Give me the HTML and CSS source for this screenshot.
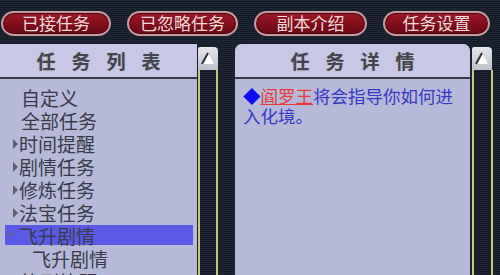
FILE: index.html
```html
<!DOCTYPE html>
<html lang="zh">
<head>
<meta charset="utf-8">
<link rel="stylesheet" href="styles.css">
</head>
<body>
<div class="topbar">
  <div class="btn b1">已接任务</div>
  <div class="btn b2">已忽略任务</div>
  <div class="btn b3">副本介绍</div>
  <div class="btn b4">任务设置</div>
</div>
<div class="main">
  <div class="panel left">
    <div class="phead">任务列表</div>
    <div class="pbody list">
      <div class="row"><span class="gut"></span><span class="txt">自定义</span></div>
      <div class="row"><span class="gut"></span><span class="txt">全部任务</span></div>
      <div class="row"><span class="gut"><span class="tri"></span></span><span class="txt">时间提醒</span></div>
      <div class="row"><span class="gut"><span class="tri"></span></span><span class="txt">剧情任务</span></div>
      <div class="row"><span class="gut"><span class="tri"></span></span><span class="txt">修炼任务</span></div>
      <div class="row"><span class="gut"><span class="tri"></span></span><span class="txt">法宝任务</span></div>
      <div class="row sel"><span class="gut"><span class="dtri"></span></span><span class="txt">飞升剧情</span></div>
      <div class="row sub"><span class="txt">飞升剧情</span></div>
      <div class="row"><span class="gut"></span><span class="txt">签到答题</span></div>
    </div>
  </div>
  <div class="sbar sleft">
    <div class="sbtn"><svg width="20" height="22" viewBox="0 0 20 22"><polygon points="10,6 16,17 4,17" fill="#ffffff"/><line x1="10" y1="6" x2="4" y2="17" stroke="#303038" stroke-width="2"/></svg></div>
    <div class="track"></div>
  </div>
  <div class="panel right">
    <div class="phead">任务详情</div>
    <div class="pbody detail">
      <p class="line"><span class="dia">◆</span><span class="npc">阎罗王</span>将会指导你如何进</p>
      <p class="line">入化境。</p>
    </div>
  </div>
  <div class="sbar sright">
    <div class="sbtn"><svg width="20" height="22" viewBox="0 0 20 22"><polygon points="10,6 16,17 4,17" fill="#ffffff"/><line x1="10" y1="6" x2="4" y2="17" stroke="#303038" stroke-width="2"/></svg></div>
    <div class="track"></div>
  </div>
</div>
</body>
</html>
```
FILE: styles.css
```css
html, body {
  margin: 0;
  padding: 0;
}
body {
  width: 500px;
  height: 275px;
  overflow: hidden;
  font-family: "Noto Sans CJK SC", "Noto Sans", sans-serif;
  background: repeating-linear-gradient(#1f2634 0 1px, #141a26 1px 2px);
}
.topbar {
  height: 44px;
  box-sizing: border-box;
  padding: 11px 0 0 1px;
  display: flex;
  align-items: flex-start;
  gap: 16px;
}
.btn {
  height: 25px;
  box-sizing: border-box;
  border: 2px solid #c49a9e;
  border-radius: 13px;
  background: linear-gradient(#a01828, #7c0c1a 60%, #6a0814);
  color: #eedcdc;
  font-size: 17px;
  line-height: 20px;
  text-align: center;
  box-shadow: inset 0 0 0 1px #4a0810;
}
.b1 { width: 110px; }
.b2 { width: 111px; }
.b3 { width: 113px; }
.b4 { width: 107px; }
.main {
  display: flex;
  height: 231px;
}
.panel {
  background: #b6bad8;
  display: flex;
  flex-direction: column;
}
.left { width: 197px; }
.right {
  width: 235px;
  margin-left: 2px;
  border-radius: 7px 7px 0 0;
  overflow: hidden;
}
.phead {
  height: 33px;
  border-bottom: 2px solid #3a3a46;
  background: #c8c8e6;
  color: #46464e;
  font-weight: bold;
  font-size: 19px;
  line-height: 33px;
  text-align: center;
  letter-spacing: 16px;
  padding-left: 16px;
  text-shadow: 0 0 1px #999;
}
.list {
  padding-top: 7px;
}
.row {
  height: 23px;
  display: flex;
  align-items: center;
  color: #3a3a4a;
  font-size: 19px;
  line-height: 23px;
}
.gut {
  width: 19px;
  display: flex;
  justify-content: flex-end;
  padding-right: 1px;
  box-sizing: border-box;
}
.row .gut:empty + .txt { margin-left: 2px; }
.tri {
  width: 0;
  height: 0;
  border-left: 5px solid #606070;
  border-top: 5px solid transparent;
  border-bottom: 5px solid transparent;
}
.dtri {
  width: 0;
  height: 0;
  border-top: 4px solid #6060a0;
  border-left: 5px solid transparent;
  border-right: 5px solid transparent;
  margin-right: 2px;
}
.sel {
  background: #5a5ae6;
  margin: 0 4px 0 5px;
  height: 20px;
  margin-top: 1px;
  margin-bottom: 2px;
}
.sel .gut { width: 14px; }
.sub { padding-left: 32px; }
.sbar {
  display: flex;
  flex-direction: column;
}
.sleft {
  width: 36px;
  padding-left: 1px;
  box-sizing: border-box;
}
.sright {
  width: 30px;
  padding-left: 2px;
  box-sizing: border-box;
}
.sbtn {
  width: 20px;
  height: 23px;
  margin-top: 3px;
  background: linear-gradient(#e6e6ec, #c0c0c8);
  border-radius: 2px 4px 0 0;
  display: flex;
}
.track {
  width: 20px;
  flex: 1;
  box-sizing: border-box;
  border-left: 2px solid #c4c878;
  border-right: 2px solid #c4c878;
  background: repeating-linear-gradient(#1c2436 0 1px, #121828 1px 2px);
}
.sright .track { width: 21px; }
.detail {
  padding: 7px 8px 0 8px;
  font-size: 17.5px;
  line-height: 20px;
  color: #3838c6;
}
.line {
  margin: 0;
  height: 20px;
  white-space: nowrap;
}
.dia {
  color: #0c0cf0;
}
.npc {
  color: #e83a3a;
  text-decoration: underline;
  text-decoration-color: #e83a3a;
}
```
